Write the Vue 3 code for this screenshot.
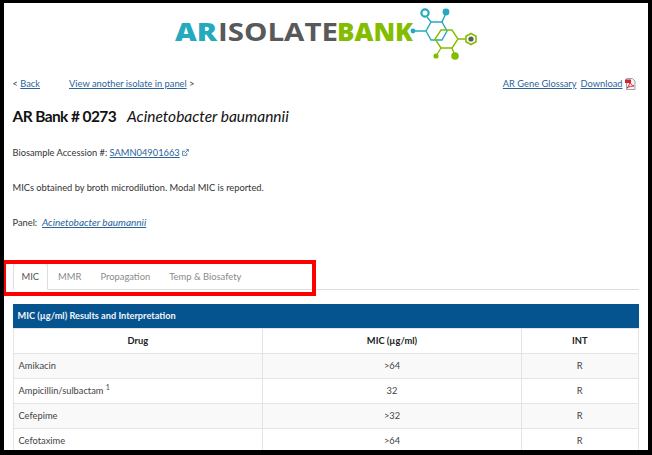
<script setup>
const rows = [
  { drug: 'Amikacin', mic: '>64', int: 'R' },
  { drug: 'Ampicillin/sulbactam', sup: '1', mic: '32', int: 'R' },
  { drug: 'Cefepime', mic: '>32', int: 'R' },
  { drug: 'Cefotaxime', mic: '>64', int: 'R' }
]
const tabs = ['MIC', 'MMR', 'Propagation', 'Temp & Biosafety']
</script>

<template>
  <div class="frame">
    <header class="logo">
      <svg width="310" height="60" viewBox="170 3 310 60">
        <text x="175" y="41" class="logo-text" fill="#25a9bd" textLength="42" lengthAdjust="spacingAndGlyphs">AR</text>
        <text x="218" y="41" class="logo-text grey" fill="#58595b" textLength="120" lengthAdjust="spacingAndGlyphs">ISOLATE</text>
        <text x="337" y="41" class="logo-text" fill="#84bd00" textLength="76" lengthAdjust="spacingAndGlyphs">BANK</text>
        <g fill="none" stroke-width="1.4">
          <path d="M413 31H426L431 22H442L447 31L442 40H431L426 31" stroke="#25a9bd" />
          <path d="M427 17L431 22M442 22L446 13" stroke="#25a9bd" />
          <circle cx="425" cy="13" r="3.600" stroke="#25a9bd" stroke-width="2.200" />
          <path d="M441 30H452L458 39L452 48H441L435 39Z" stroke="#84bd00" />
          <path d="M458 39H466M441 48L436 56M452 48L455 56" stroke="#84bd00" />
          <path d="M471 33.500L476 36.300V41.700L471 44.500L466 41.700V36.300Z" stroke="#84bd00" stroke-width="1.600" />
        </g>
        <circle cx="413" cy="31" r="2.400" fill="#25a9bd" />
        <circle cx="446" cy="12" r="3.400" fill="#25a9bd" />
        <circle cx="436" cy="56" r="2.600" fill="#84bd00" />
        <circle cx="455" cy="56" r="3.800" fill="#84bd00" />
        <circle cx="471" cy="39" r="2.600" fill="#58595b" />
      </svg>
    </header>

    <nav class="links">
      <div class="links-left">
        <span>&lt; <a href="#">Back</a></span>
        <span><a href="#">View another isolate in panel</a> &gt;</span>
      </div>
      <div class="links-right">
        <a href="#">AR Gene Glossary</a>
        <a href="#">Download</a>
        <svg class="pdf" width="11" height="12" viewBox="0 0 11 12">
          <path d="M1.500 .5H7.500L10 3V11.500H1.500Z" fill="#f4f4f4" stroke="#8a8a8a" stroke-width=".8" />
          <path d="M0 1.500H6V5H0Z" fill="#d8232a" />
          <path d="M2 10C4 8 5 5 5 3.500C5.500 6 7 7.500 9 8C7 8 4 8.500 2 10Z" fill="none" stroke="#d8232a" />
        </svg>
      </div>
    </nav>

    <h1 class="title"><strong>AR Bank # 0273</strong><em>Acinetobacter baumannii</em></h1>

    <p class="line accession">
      Biosample Accession #: <a href="#">SAMN04901663</a>
      <svg class="ext" width="7" height="7" viewBox="0 0 8 8" fill="none" stroke="#2f6aa0" stroke-width=".9">
        <path d="M5.500 4.500V7.300H.7V2.500H3.500" />
        <path d="M3 5L7.300 .7M4.800 .7H7.300V3.200" />
      </svg>
    </p>
    <p class="line mics">MICs obtained by broth microdilution. Modal MIC is reported.</p>
    <p class="line panel">Panel:&nbsp; <a href="#"><em>Acinetobacter baumannii</em></a></p>

    <ul class="tabs">
      <li v-for="(tab, i) in tabs" :key="tab" class="tab" :class="{ active: i === 0 }">{{ tab }}</li>
    </ul>

    <section class="results">
      <div class="results-head">MIC (µg/ml) Results and Interpretation</div>
      <table>
        <colgroup>
          <col class="col-drug" />
          <col class="col-mic" />
          <col />
        </colgroup>
        <thead>
          <tr>
            <th>Drug</th>
            <th>MIC (µg/ml)</th>
            <th>INT</th>
          </tr>
        </thead>
        <tbody>
          <tr v-for="row in rows" :key="row.drug">
            <td class="drug">{{ row.drug }} <sup v-if="row.sup">{{ row.sup }}</sup></td>
            <td>{{ row.mic }}</td>
            <td>{{ row.int }}</td>
          </tr>
        </tbody>
      </table>
    </section>

    <div class="highlight"></div>
  </div>
</template>

<style>
html, body {
  margin: 0;
  overflow: hidden;
}
</style>

<style scoped>
.frame {
  position: relative;
  box-sizing: border-box;
  width: 652px;
  height: 455px;
  overflow: hidden;
  background: #fff;
  border: solid #000;
  border-width: 3px 4px 5px 4px;
  padding: 0 9.500px 0 8.500px;
  font-family: Lato, "Open Sans", sans-serif;
  font-size: 9.300px;
  color: #333;
}

.logo {
  display: flex;
  height: 60px;
  padding-left: 157.500px;
}

.logo-text {
  font-family: "Open Sans", sans-serif;
  font-size: 25px;
  font-weight: 800;
}

.logo-text.grey {
  font-weight: 700;
}

a {
  color: #2b6499;
  text-decoration: underline;
}

.links {
  display: flex;
  justify-content: space-between;
  margin-top: 15px;
  padding-right: 3px;
  line-height: 12px;
}

.links-left {
  display: flex;
  gap: 29px;
}

.links-right {
  display: flex;
  align-items: center;
  gap: 4px;
}

.pdf {
  margin-left: -2px;
}

.title {
  display: flex;
  gap: 11px;
  margin: 16px 0 0;
  font-size: 15.500px;
  font-weight: 400;
  line-height: 20px;
  color: #111;
}

.title strong {
  font-weight: 700;
  letter-spacing: -.6px;
}

.line {
  margin: 0;
  line-height: 12px;
}

.accession {
  margin-top: 21px;
}

.ext {
  margin-left: 2px;
}

.mics {
  margin-top: 23px;
}

.panel {
  margin-top: 22px;
}

.panel em {
  font-size: 10px;
}

.tabs {
  display: flex;
  margin: 34px 0 0;
  padding: 0;
  list-style: none;
  border-bottom: 1px solid #ddd;
}

.tab {
  padding: 0 8px;
  margin-right: 1px;
  height: 25px;
  line-height: 25px;
  margin-bottom: -1px;
  font-size: 9.400px;
  color: #8a8a8a;
  border: 1px solid transparent;
}

.tab.active {
  color: #555;
  background: #fff;
  border-color: #ddd #ddd #fff;
  border-radius: 3px 3px 0 0;
}

.results {
  margin-top: 14px;
}

.results-head {
  height: 24px;
  padding-left: 5px;
  background: #05538f;
  color: #f2f6fa;
  font-size: 9.200px;
  font-weight: 700;
  line-height: 24px;
}

table {
  width: 100%;
  table-layout: fixed;
  border-collapse: collapse;
  font-size: 9.300px;
}

.col-drug {
  width: 249.500px;
}

.col-mic {
  width: 259px;
}

th, td {
  height: 24px;
  padding: 0 5px;
  border: 1px solid #e4e4e4;
  text-align: center;
  line-height: 12px;
}

th {
  color: #222;
  font-size: 9.300px;
  font-weight: 700;
}

td {
  color: #444;
}

td.drug {
  text-align: left;
}

tbody tr:nth-child(odd) {
  background: #f9f9f9;
}

sup {
  font-size: 7px;
  line-height: 0;
}

.highlight {
  position: absolute;
  left: -2px;
  top: 257px;
  width: 314px;
  height: 36px;
  box-sizing: border-box;
  border: 4px solid #f00;
  pointer-events: none;
}
</style>
